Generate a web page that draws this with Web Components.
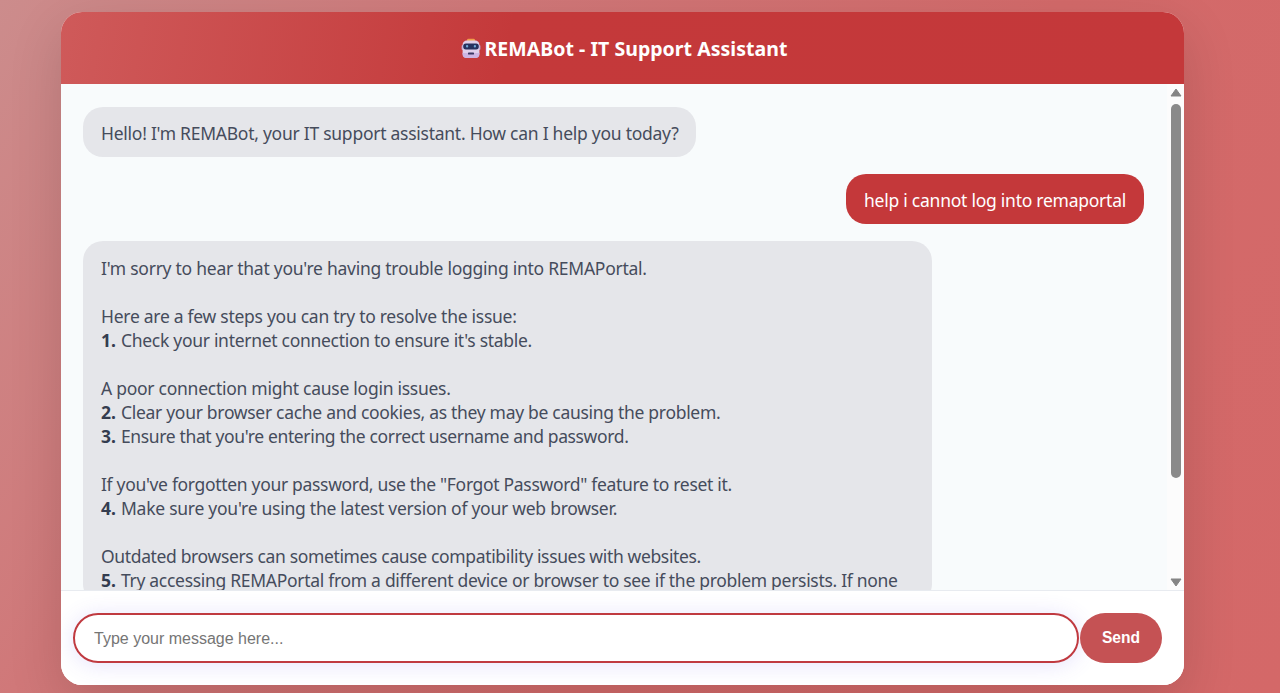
<!DOCTYPE html>
<html lang="en">
<head>
<meta charset="utf-8">
<title>REMABot - IT Support Assistant</title>
<style>
html, body { height: 100%; margin: 0; overflow: hidden; }
body {
  box-sizing: border-box;
  padding: 12px 96px 8px 61px;
  font-family: "Noto Sans", "Open Sans", sans-serif;
  background: linear-gradient(125deg, #cc8c8c 0%, #d07879 28%, #d36a6a 60%, #d46868 100%);
}
</style>
</head>
<body>
<chat-window>
  <chat-header slot="header">REMABot - IT Support Assistant</chat-header>
  <chat-message>
    <chat-line tracking="-.26">Hello! I'm REMABot, your IT support assistant. How can I help you today?</chat-line>
  </chat-message>
  <chat-message from="user">
    <chat-line tracking="-.25">help i cannot log into remaportal</chat-line>
  </chat-message>
  <chat-message long>
    <chat-line tracking="-.26">I'm sorry to hear that you're having trouble logging into REMAPortal.</chat-line>
    <chat-line></chat-line>
    <chat-line tracking="-.275">Here are a few steps you can try to resolve the issue:</chat-line>
    <chat-line step="1." tracking="-.295">Check your internet connection to ensure it's stable.</chat-line>
    <chat-line></chat-line>
    <chat-line tracking="-.265">A poor connection might cause login issues.</chat-line>
    <chat-line step="2." tracking="-.3">Clear your browser cache and cookies, as they may be causing the problem.</chat-line>
    <chat-line step="3." tracking="-.365">Ensure that you're entering the correct username and password.</chat-line>
    <chat-line></chat-line>
    <chat-line tracking="-.32">If you've forgotten your password, use the "Forgot Password" feature to reset it.</chat-line>
    <chat-line step="4." tracking="-.26">Make sure you're using the latest version of your web browser.</chat-line>
    <chat-line></chat-line>
    <chat-line tracking="-.355">Outdated browsers can sometimes cause compatibility issues with websites.</chat-line>
    <chat-line step="5." tracking="-.3">Try accessing REMAPortal from a different device or browser to see if the problem persists. If none</chat-line>
  </chat-message>
  <chat-scrollbar slot="scrollbar"></chat-scrollbar>
  <chat-composer slot="footer" placeholder="Type your message here..."></chat-composer>
</chat-window>

<script>
function attach(el, html) {
    const template = document.createElement('template');
    template.innerHTML = html;
    const root = el.attachShadow({ mode: 'open' });
    root.appendChild(template.content.cloneNode(true));
    return root;
}

class ChatWindow extends HTMLElement {
    constructor() {
        super();
        attach(this, `
<style>
:host {
  display: flex;
  flex-direction: column;
  height: 100%;
  border-radius: 21px;
  overflow: hidden;
  background: #fff;
  box-shadow: 0 18px 54px rgba(0, 0, 0, .14);
}
.middle { flex: 1; min-height: 0; display: flex; background: #f8fbfc; }
.list {
  flex: 1;
  min-width: 0;
  overflow: hidden;
  display: flex;
  flex-direction: column;
  gap: 17px;
  padding: 22.5px 23px 0 22px;
}
</style>
<slot name="header"></slot>
<div class="middle">
  <div class="list"><slot></slot></div>
  <slot name="scrollbar"></slot>
</div>
<slot name="footer"></slot>`);
    }
}
customElements.define('chat-window', ChatWindow);

class BotIcon extends HTMLElement {
    constructor() {
        super();
        attach(this, `
<style>
:host { display: block; width: 20px; height: 21px; }
svg { display: block; }
</style>
<svg width="20" height="21" viewBox="0 0 20 21">
  <path d="M6 2.2Q6 .8 7.5.8h5Q14 .8 14 2.2V4H6z" fill="#f0a04b"/>
  <rect x=".6" y="7" width="2" height="5" rx="1" fill="#b8a3cf"/>
  <rect x="17.4" y="7" width="2" height="5" rx="1" fill="#b8a3cf"/>
  <rect x="1.6" y="2.6" width="16.8" height="17.4" rx="4.2" fill="#e0cfea"/>
  <path d="M1.6 15h16.8v1.2a3.8 3.8 0 0 1-3.8 3.8H5.4a3.8 3.8 0 0 1-3.8-3.8z" fill="#cdb5e2"/>
  <rect x="2.2" y="5.4" width="15.6" height="6" rx="2.6" fill="#26315f"/>
  <rect x="5" y="7.1" width="2.2" height="2.5" rx="1" fill="#74a9d8"/>
  <rect x="12.8" y="7.1" width="2.2" height="2.5" rx="1" fill="#74a9d8"/>
  <rect x="7" y="14.4" width="6" height="2.2" rx=".7" fill="#3b3762"/>
</svg>`);
    }
}
customElements.define('bot-icon', BotIcon);

class ChatHeader extends HTMLElement {
    constructor() {
        super();
        attach(this, `
<style>
:host {
  display: flex;
  flex: none;
  align-items: center;
  justify-content: center;
  gap: 4px;
  height: 72px;
  padding: 1px 0 0 3px;
  box-sizing: border-box;
  color: #fff;
  font-size: 19.5px;
  font-weight: 700;
  letter-spacing: .03px;
  background: linear-gradient(100deg, #cf5a5a 0%, #c4393a 40%, #c4383a 100%);
}
span { margin-top: -1px; }
</style>
<bot-icon></bot-icon>
<span><slot></slot></span>`);
    }
}
customElements.define('chat-header', ChatHeader);

class ChatMessage extends HTMLElement {
    constructor() {
        super();
        attach(this, `
<style>
:host {
  display: block;
  flex: none;
  align-self: flex-start;
  box-sizing: border-box;
  padding: 14.2px 18px 12.3px;
  border-radius: 20px;
  font-size: 17.5px;
  line-height: 24px;
  color: #454c5c;
  background: #e5e6ea;
}
:host([from="user"]) { align-self: flex-end; color: #fff; background: #c4383a; }
:host([long]) { width: 849px; padding-top: 14.5px; }
</style>
<slot></slot>`);
    }
}
customElements.define('chat-message', ChatMessage);

class ChatLine extends HTMLElement {
    constructor() {
        super();
        this.root = attach(this, `
<style>
:host { display: block; height: 24px; white-space: nowrap; }
b { display: inline-block; width: 20px; color: #343d50; letter-spacing: 0; }
b:empty { display: none; }
</style>
<b></b><slot></slot>`);
    }

    connectedCallback() {
        this.root.querySelector('b').textContent = this.getAttribute('step') || '';
        // tracking is in px
        this.style.letterSpacing = (this.getAttribute('tracking') || 0) + 'px';
    }
}
customElements.define('chat-line', ChatLine);

class ChatScrollbar extends HTMLElement {
    constructor() {
        super();
        attach(this, `
<style>
:host {
  display: flex;
  flex: none;
  flex-direction: column;
  align-items: center;
  width: 17px;
  box-sizing: border-box;
  padding: 4px 0 3px;
  background: #fcfcfc;
}
.thumb { width: 10px; height: 374px; margin: 7px 0 auto; border-radius: 5px; background: #8a8a8a; }
svg { display: block; fill: #858585; stroke: #858585; stroke-width: 1; stroke-linejoin: round; }
</style>
<svg width="12" height="9"><path d="M6 1 11 8H1z"/></svg>
<div class="thumb"></div>
<svg width="12" height="9"><path d="M6 8 11 1H1z"/></svg>`);
    }
}
customElements.define('chat-scrollbar', ChatScrollbar);

class ChatComposer extends HTMLElement {
    constructor() {
        super();
        this.root = attach(this, `
<style>
:host {
  display: flex;
  flex: none;
  gap: 1px;
  height: 95px;
  box-sizing: border-box;
  padding: 22.4px 22px 22px 12px;
  border-top: 1px solid #e8ebf0;
  background: #fff;
}
input, button { box-sizing: border-box; margin: 0; font-family: "Liberation Sans", Arial, sans-serif; font-size: 16px; outline: none; }
input {
  flex: 1;
  min-width: 0;
  height: 50px;
  padding: 2px 19px 0;
  border: 2px solid #c03a40;
  border-radius: 25px;
  background: #fff;
  box-shadow: 0 2px 22px rgba(102, 80, 234, .16);
}
input::placeholder { color: #757575; }
button {
  width: 82px;
  height: 50px;
  padding: 0;
  border: 0;
  border-radius: 25px;
  color: #fff;
  font-size: 15.6px;
  font-weight: 700;
  background: #c55254;
}
</style>
<input type="text">
<button>Send</button>`);
    }

    connectedCallback() {
        this.root.querySelector('input').placeholder = this.getAttribute('placeholder');
    }
}
customElements.define('chat-composer', ChatComposer);
</script>
</body>
</html>
